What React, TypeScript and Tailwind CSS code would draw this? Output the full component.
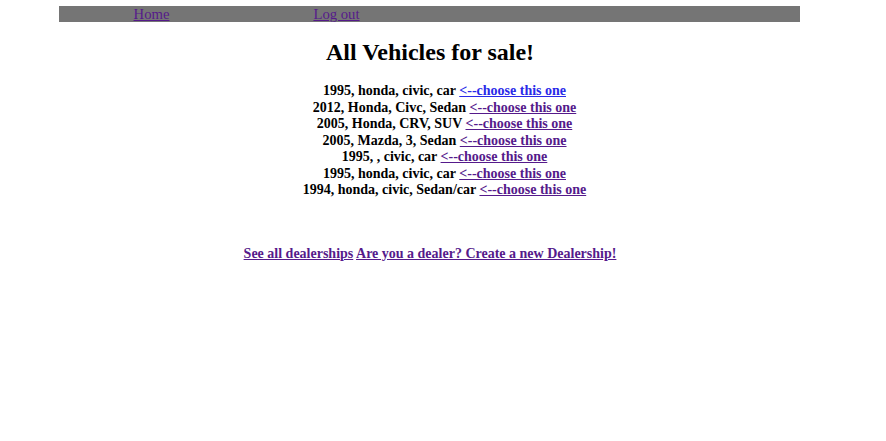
export default function App() {
  const rows = [
    { t: "1995, honda, civic, car", visited: false },
    { t: "2012, Honda, Civc, Sedan", visited: true },
    { t: "2005, Honda, CRV, SUV", visited: true },
    { t: "2005, Mazda, 3, Sedan", visited: true },
    { t: "1995, , civic, car", visited: true },
    { t: "1995, honda, civic, car", visited: true },
    { t: "1994, honda, civic, Sedan/car", visited: true },
  ];
  return (
    <div
      className="w-[886px] h-[441px] bg-white text-black"
      style={{ fontFamily: '"Liberation Serif", "Times New Roman", serif' }}
    >
      <div className="w-[860px]">
        <div className="pt-[6px]">
          <div className="ml-[59px] w-[741px] h-[16px] bg-[#757575] flex">
            <div className="w-[185px] text-center text-[14.7px] leading-[16px]">
              <a href="#" className="text-[#551a8b] underline">Home</a>
            </div>
            <div className="w-[185px] text-center text-[14.7px] leading-[16px]">
              <a href="#" className="text-[#551a8b] underline">Log out</a>
            </div>
          </div>
        </div>
        <h2 className="mt-[16px] text-center text-[24px] font-bold leading-[28px]">
          All Vehicles for sale!
        </h2>
        <div className="mt-[17px] pl-[29px] flex flex-col items-center text-[14px] font-bold leading-[16.5px]">
          {rows.map((r, i) => (
            <div key={i}>
              {r.t}{" "}
              <a
                href="#"
                className={
                  r.visited ? "text-[#551a8b] underline" : "text-[#2a2ae8] underline"
                }
              >
                &lt;--choose this one
              </a>
            </div>
          ))}
        </div>
        <div className="mt-[47px] text-center text-[14px] font-bold leading-[16.5px]">
          <a href="#" className="text-[#551a8b] underline">See all dealerships</a>{" "}
          <a href="#" className="text-[#551a8b] underline">
            Are you a dealer? Create a new Dealership!
          </a>
        </div>
      </div>
    </div>
  );
}
